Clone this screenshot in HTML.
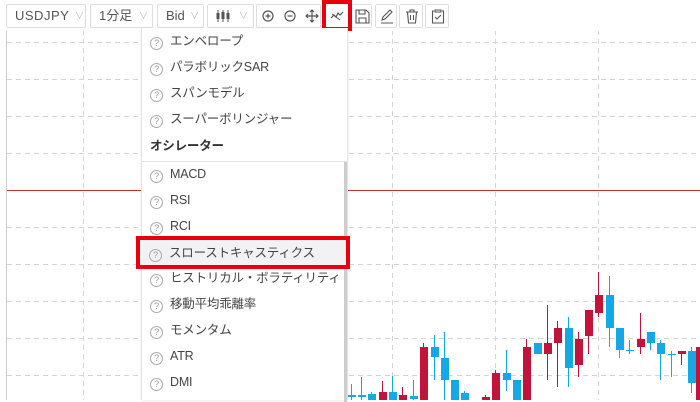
<!DOCTYPE html>
<html><head><meta charset="utf-8"><style>
*{margin:0;padding:0;box-sizing:border-box}
body{width:700px;height:400px;overflow:hidden;background:#fff;position:relative;font-family:"Liberation Sans","Noto Sans CJK JP",sans-serif;color:#444}
.b{position:absolute;top:4px;height:24px;border:1px solid #ddd;border-radius:2px;background:#fff;font-size:13px;color:#555;line-height:22px;padding-left:8px}
.chev{position:absolute;top:0;font-size:9px;color:#bbb}
#dd{position:absolute;left:141px;top:28px;width:207px;height:372px;background:#fff;border-left:1px solid #e4e4e4;border-right:1px solid #e4e4e4;box-shadow:0 1px 3px rgba(0,0,0,.08)}
.it{position:absolute;left:8px;font-size:12.5px;color:#444;height:20px;line-height:20px;white-space:nowrap;letter-spacing:-0.2px}
.q{display:inline-block;width:13px;height:13px;border:1px solid #aaa;border-radius:50%;font-size:9px;line-height:11px;text-align:center;color:#999;margin-right:7px;vertical-align:-2px;position:relative;top:-1px}
</style></head><body>
<svg width="700" height="400" style="position:absolute;left:0;top:0">
<line x1="6.5" y1="30" x2="6.5" y2="400" stroke="#ccc"/>
<g stroke="#d4d4d4" stroke-dasharray="5,4">
<line x1="83.5" y1="30" x2="83.5" y2="400"/><line x1="186.5" y1="30" x2="186.5" y2="400"/><line x1="289.5" y1="30" x2="289.5" y2="400"/><line x1="392.5" y1="30" x2="392.5" y2="400"/><line x1="495.5" y1="30" x2="495.5" y2="400"/><line x1="598.5" y1="30" x2="598.5" y2="400"/>
<line x1="7" y1="42.5" x2="700" y2="42.5"/><line x1="7" y1="79.5" x2="700" y2="79.5"/><line x1="7" y1="116.5" x2="700" y2="116.5"/><line x1="7" y1="153.5" x2="700" y2="153.5"/><line x1="7" y1="227.5" x2="700" y2="227.5"/><line x1="7" y1="264.5" x2="700" y2="264.5"/><line x1="7" y1="301.5" x2="700" y2="301.5"/><line x1="7" y1="338.5" x2="700" y2="338.5"/><line x1="7" y1="375.5" x2="700" y2="375.5"/>
</g>
<line x1="7" y1="190.5" x2="700" y2="190.5" stroke="#c8322e"/>
<g id="c"></g>
</svg>
<script>
var d=[[351,384,400,395,397,'b'],[361,377,400,395,397,'b'],[371,392,400,394,400,'b'],[382,381,400,392,400,'r'],[392,376,400,392,400,'b'],[402,387,400,395,400,'r'],[413,380,400,396,399,'b'],[423,343,400,347,400,'r'],[434,335,380,347,357,'b'],[444,332,400,358,380,'b'],[454,380,400,380,400,'b'],[464,391,400,393,400,'b'],[485,395,400,397,400,'r'],[495,370,400,373,400,'r'],[506,350,391,373,380,'b'],[516,380,400,380,400,'b'],[526,339,400,347,400,'r'],[537,343,354,343,354,'b'],[547,305,380,343,354,'r'],[557,321,387,328,343,'r'],[568,317,387,328,368,'b'],[578,332,377,339,365,'r'],[588,310,354,310,336,'r'],[598,272,317,295,313,'r'],[609,276,347,295,328,'b'],[619,328,358,328,350,'b'],[629,340,354,350,351,'b'],[640,313,354,339,347,'r'],[650,332,350,332,343,'b'],[660,340,380,343,354,'b'],[671,351,377,354,355,'b'],[681,351,365,351,354,'r'],[691,347,393,351,383,'b'],[699,347,400,347,400,'r']];
var s='';d.forEach(function(a){var c=a[5]=='b'?'#14a9e4':'#c3133a';s+='<line x1="'+(a[0]+.5)+'" y1="'+a[1]+'" x2="'+(a[0]+.5)+'" y2="'+a[2]+'" stroke="'+c+'"/><rect x="'+(a[0]-3)+'" y="'+a[3]+'" width="8" height="'+Math.max(1,a[4]-a[3])+'" fill="'+c+'"/>';});
document.getElementById('c').innerHTML=s;
</script>
<div style="position:absolute;left:0;top:0;width:700px;height:31px;background:#fff"></div>
<div class="b" style="left:6px;width:80px;letter-spacing:.5px">USDJPY<span class="chev" style="left:68px">∨</span></div>
<div class="b" style="left:90px;width:63px">1分足<span class="chev" style="left:48px">∨</span></div>
<div class="b" style="left:157px;width:47px">Bid<span class="chev" style="left:32px">∨</span></div>
<div class="b" style="left:207px;width:47px"><svg width="14" height="12" style="position:absolute;left:8px;top:5px"><g stroke="#555"><line x1="2" y1="0" x2="2" y2="12"/><line x1="7" y1="0" x2="7" y2="12"/><line x1="12" y1="0" x2="12" y2="12"/></g><rect x="0.5" y="3" width="3" height="6" fill="#555"/><rect x="5.5" y="2" width="3" height="7" fill="#555"/><rect x="10.5" y="3" width="3" height="6" fill="#555"/></svg><span class="chev" style="left:31px">∨</span></div>
<div class="b" style="left:256px;width:65px;padding:0"><svg width="65" height="22"><g fill="none" stroke="#555" stroke-width="1.2"><circle cx="11" cy="11" r="5"/><path d="M8.5 11h5M11 8.5v5"/><circle cx="33" cy="11" r="5"/><path d="M30.5 11h5"/><path d="M55 5v12M49 11h12M53 7l2-2 2 2M53 15l2 2 2-2M51 9l-2 2 2 2M59 9l2 2-2 2"/></g></svg></div>
<div style="position:absolute;left:322px;top:0;width:30px;height:31px;background:#e8000c"></div>
<div style="position:absolute;left:326px;top:4px;width:22px;height:23px;background:#fff"><svg width="22" height="23"><path d="M5 14l3-3 2 2 2-4 2 2 3-3" fill="none" stroke="#555" stroke-width="1.2"/><path d="M6 10l8 6" stroke="#555"/></svg></div>
<div class="b" style="left:352px;width:20px;padding:0;border-left:none"><svg width="20" height="22"><path d="M4 5h10l3 3v10H4z M7 5v4h6V5 M7 18v-5h7v5" fill="none" stroke="#555" stroke-width="1.1"/></svg></div>
<div class="b" style="left:375px;width:22px;padding:0"><svg width="22" height="22"><path d="M6 15l1-3 7-7 2 2-7 7z M5 18h12" fill="none" stroke="#555" stroke-width="1.1"/></svg></div>
<div class="b" style="left:399px;width:24px;padding:0"><svg width="24" height="22"><path d="M6 7h12M10 7V5h4v2M7.5 7l1 11h7l1-11M10.5 10v5M13.5 10v5" fill="none" stroke="#555" stroke-width="1.1"/></svg></div>
<div class="b" style="left:425px;width:24px;padding:0"><svg width="24" height="22"><path d="M8 6H6.5v12h11V6H16M9 5h6v2H9z M9 12l2 2 4-4" fill="none" stroke="#555" stroke-width="1.1"/></svg></div>
<div id="dd">
<div class="it" style="top:3px"><span class="q">?</span>エンベロープ</div>
<div class="it" style="top:29px"><span class="q">?</span>パラボリックSAR</div>
<div class="it" style="top:55px"><span class="q">?</span>スパンモデル</div>
<div class="it" style="top:81px"><span class="q">?</span>スーパーボリンジャー</div>
<div class="it" style="top:108px;font-weight:bold;color:#333;left:8px">オシレーター</div>
<div style="position:absolute;left:0;top:133px;width:205px;border-top:1px solid #e4e4e4"></div>
<div style="position:absolute;left:202px;top:134px;width:3px;height:240px;background:#ccc"></div>
<div class="it" style="top:136px"><span class="q">?</span>MACD</div>
<div class="it" style="top:162px"><span class="q">?</span>RSI</div>
<div class="it" style="top:188px"><span class="q">?</span>RCI</div>
<div class="it" style="top:240px"><span class="q">?</span>ヒストリカル・ボラティリティ</div>
<div class="it" style="top:266px"><span class="q">?</span>移動平均乖離率</div>
<div class="it" style="top:292px"><span class="q">?</span>モメンタム</div>
<div class="it" style="top:318px"><span class="q">?</span>ATR</div>
<div class="it" style="top:344px"><span class="q">?</span>DMI</div>
</div>
<div style="position:absolute;left:136px;top:236px;width:214px;height:33px;border:4px solid #e8000c;background:#f2f2f4"></div>
<div class="it" style="top:243px;left:149px"><span class="q">?</span>スローストキャスティクス</div>
</body></html>
